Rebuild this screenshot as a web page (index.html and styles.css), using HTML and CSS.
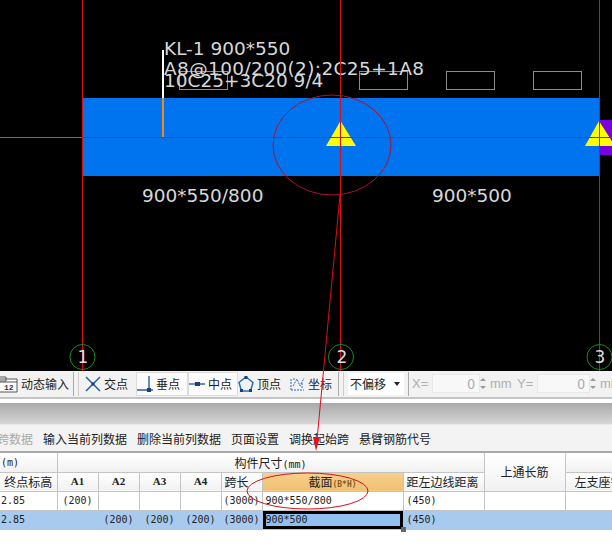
FILE: index.html
```html
<!DOCTYPE html>
<html lang="en">
<head>
    <meta charset="UTF-8">
    <title>钢筋平法输入</title>
    <link rel="stylesheet" href="styles.css">
</head>
<body>
    <div class="page">
        <!-- Drawing area -->
        <svg class="canvas" width="612" height="371" viewBox="0 0 612 371">
            <rect x="83" y="98" width="516" height="78" fill="#0073ee"/>
            <rect x="599" y="120" width="13" height="35" fill="#7a00e0"/>
            <line x1="0" y1="137.5" x2="83" y2="137.5" stroke="#1fa01f"/>
            <line x1="163" y1="50" x2="163" y2="98" stroke="#fff" stroke-width="2"/>
            <line x1="163" y1="98" x2="163" y2="137" stroke="#f08a1c" stroke-width="2"/>
            <g fill="none" stroke="#8c8c8c">
                <rect x="179.5" y="71.5" width="48" height="18"/>
                <rect x="359.5" y="71.5" width="48" height="18"/>
                <rect x="446.5" y="71.5" width="48" height="18"/>
                <rect x="533.5" y="71.5" width="48" height="18"/>
            </g>
            <polygon points="340.5,121 356,146 326,146" fill="#ffff00"/>
            <polygon points="599,121 615,146 585,146" fill="#ffff00"/>
            <g class="cad-text">
                <text x="164" y="55">KL-1 900*550</text>
                <text x="164" y="75" textLength="260">A8@100/200(2);2C25+1A8</text>
                <text x="164" y="87">10C25+3C20 9/4</text>
                <text x="142" y="202">900*550/800</text>
                <text x="432" y="202">900*500</text>
            </g>
            <g fill="none" stroke="#d8101c">
                <line x1="82.5" y1="0" x2="82.5" y2="371"/>
                <line x1="340.5" y1="0" x2="340.5" y2="371"/>
                <line x1="599.5" y1="0" x2="599.5" y2="371"/>
                <line x1="83" y1="137.5" x2="612" y2="137.5"/>
            </g>
            <g fill="none" stroke="#1f8a1f">
                <circle cx="82.5" cy="357" r="12.5"/>
                <circle cx="341" cy="357" r="12.5"/>
                <circle cx="599.5" cy="357" r="12.5"/>
            </g>
            <g class="axis-text">
                <text x="83" y="363">1</text>
                <text x="342" y="363">2</text>
                <text x="600" y="363">3</text>
            </g>
        </svg>

        <!-- Snap toolbar -->
        <div class="toolbar">
            <div class="tool tool-first">
                <svg width="18" height="18" viewBox="0 0 18 18"><path d="M0 4h17v13H0M0 7h17M0 2h6v4H0" fill="#fff" stroke="#555"/><text x="4" y="15" class="mini">12</text></svg>
                <span>动态输入</span>
            </div>
            <i class="grip grip-a"></i>
            <div class="tool w51">
                <svg width="16" height="16" viewBox="0 0 16 16"><path d="M1 1l14 14M15 1L1 15" stroke="#2a5f9e" stroke-width="1.5"/><rect x="6.500" y="6.500" width="3" height="3" fill="#1b3f78"/></svg>
                <span>交点</span>
            </div>
            <div class="tool tool-on w52">
                <svg width="16" height="16" viewBox="0 0 16 16"><path d="M0 14h16M12 0v14" stroke="#2a5f9e" stroke-width="1.4"/><rect x="10" y="12" width="4" height="4" fill="#1b3f78"/></svg>
                <span>垂点</span>
            </div>
            <div class="tool tool-on w50">
                <svg width="16" height="16" viewBox="0 0 16 16"><path d="M0 8h16" stroke="#2a5f9e" stroke-width="1.4"/><rect x="6" y="6" width="5" height="4" fill="#1b3f78"/></svg>
                <span>中点</span>
            </div>
            <div class="tool w51">
                <svg width="16" height="16" viewBox="0 0 16 16"><path d="M8 1l7 5.500L12.500 15h-9L1 6.500z" fill="none" stroke="#2a6fb8" stroke-width="1.500"/><rect x="6.500" y="0" width="3" height="3" fill="#1b3f78"/><rect x="2" y="13" width="3" height="3" fill="#1b3f78"/><rect x="11" y="13" width="3" height="3" fill="#1b3f78"/></svg>
                <span>顶点</span>
            </div>
            <div class="tool w47">
                <svg width="16" height="17" viewBox="0 0 16 17"><path d="M2 15h13M2 15V3M4 11l4-7 3 7 4-8M4 4h3M13 13V8" fill="none" stroke="#2a6fb8" stroke-dasharray="2 1"/></svg>
                <span>坐标</span>
            </div>
            <i class="grip grip-b"></i>
            <div class="combo"><span>不偏移</span><b></b></div>
            <i class="sep"></i>
            <span class="field-label">X=</span>
            <div class="num num-x">0</div>
            <div class="spin"><b></b><b></b></div>
            <span class="field-label unit">mm</span>
            <span class="field-label">Y=</span>
            <div class="num num-y">0</div>
            <div class="spin"><b></b><b></b></div>
            <span class="field-label unit">mm</span>
        </div>

        <div class="band"></div>

        <div class="tabs">
            <span class="off">跨数据</span>
            <span>输入当前列数据</span>
            <span>删除当前列数据</span>
            <span>页面设置</span>
            <span>调换起始跨</span>
            <span>悬臂钢筋代号</span>
        </div>

        <!-- Span table -->
        <table class="grid">
            <colgroup>
                <col class="c-end"><col class="c-a"><col class="c-a"><col class="c-a"><col class="c-a">
                <col class="c-a"><col class="c-sec"><col class="c-dist"><col class="c-dist"><col class="c-last">
            </colgroup>
            <tr class="head">
                <td class="left mono">(m)</td>
                <td colspan="7">构件尺寸<span class="mono">(mm)</span></td>
                <td rowspan="2">上通长筋</td>
                <td></td>
            </tr>
            <tr class="head">
                <td>终点标高</td>
                <td class="small">A1</td>
                <td class="small">A2</td>
                <td class="small">A3</td>
                <td class="small">A4</td>
                <td class="left pad">跨长</td>
                <td class="picked">截面<span class="mono bold">(B*H)</span></td>
                <td class="left pad">距左边线距离</td>
                <td class="left pad-wide">左支座钢筋</td>
            </tr>
            <tr class="mono">
                <td class="left">2.85</td>
                <td>(200)</td><td></td><td></td><td></td>
                <td>(3000)</td>
                <td class="left pad">900*550/800</td>
                <td class="left pad">(450)</td>
                <td></td><td></td>
            </tr>
            <tr class="mono current">
                <td class="left">2.85</td>
                <td></td><td>(200)</td><td>(200)</td><td>(200)</td>
                <td>(3000)</td>
                <td class="left pad active">900*500<i class="handle"></i></td>
                <td class="left pad">(450)</td>
                <td></td><td></td>
            </tr>
        </table>

        <!-- Hand-drawn annotations over the screenshot -->
        <svg class="notes" width="612" height="552" viewBox="0 0 612 552">
            <g fill="none" stroke="#d8101c">
                <ellipse cx="332" cy="145" rx="59" ry="50" stroke="#b01030"/>
                <path d="M340 195L317 440"/>
                <ellipse cx="307.500" cy="491" rx="60.500" ry="18"/>
            </g>
            <polygon points="313,437 320,437 316,451" fill="#e8101c"/>
        </svg>
    </div>
</body>
</html>
```

FILE: styles.css
```css
* {
    box-sizing: border-box;
}
html, body {
    margin: 0;
    background: #fff;
}
.page {
    position: relative;
    width: 612px;
    height: 552px;
    overflow: hidden;
    font-family: "Noto Sans CJK SC", "Liberation Sans", sans-serif;
    font-size: 12px;
    color: #222;
}
.canvas {
    display: block;
    background: #000;
}
.cad-text {
    font-family: "DejaVu Sans", sans-serif;
    font-size: 18.500px;
    fill: #d8d8d8;
}
.axis-text {
    font-family: "DejaVu Sans", sans-serif;
    font-size: 17px;
    fill: #ddd;
    text-anchor: middle;
}
.mini {
    font-family: "Liberation Mono", monospace;
    font-size: 8px;
    font-weight: bold;
    fill: #333;
}
.notes {
    position: absolute;
    top: 0;
    left: 0;
}

/* toolbar */
.toolbar {
    display: flex;
    align-items: center;
    height: 28px;
    padding-bottom: 1px;
    background: #f2f2f2;
    border-bottom: 2px solid #c4c4c4;
    white-space: nowrap;
}
.toolbar > * {
    flex: none;
}
.tool {
    display: flex;
    align-items: center;
    gap: 3px;
    height: 24px;
}
.tool-first {
    width: 72px;
}
.w47 {
    width: 47px;
}
.w50 {
    width: 50px;
}
.w51 {
    width: 51px;
}
.w52 {
    width: 52px;
}
.tool-on {
    background: #fbfbfb;
    border: 1px solid #dcdcdc;
}
.grip {
    width: 6px;
    height: 24px;
    border-left: 1px solid #aaa;
    border-right: 1px solid #ccc;
}
.grip-a {
    margin: 0 6px 0 1px;
}
.grip-b {
    margin: 0 4px 0 2px;
}
.combo {
    display: flex;
    align-items: center;
    justify-content: space-between;
    width: 56px;
    height: 22px;
    padding: 0 4px 0 2px;
    background: #fff;
    font-size: 12px;
}
.combo b {
    border: 3px solid transparent;
    border-top: 4px solid #222;
    border-bottom: 0;
}
.sep {
    width: 1px;
    height: 24px;
    margin: 0 3px 0 4px;
    background: #aaa;
}
.field-label {
    width: 17px;
    color: #b0b0b0;
    font-size: 13px;
    font-family: "Liberation Sans", sans-serif;
}
.field-label.unit {
    width: 22px;
    margin: 0 5px 0 4px;
}
.num {
    height: 19px;
    margin-left: 3px;
    padding-right: 4px;
    background: #f8f8f8;
    border: 1px solid #e8e8e8;
    color: #aaa;
    text-align: right;
    font-size: 14px;
    line-height: 17px;
}
.num-x {
    width: 48px;
}
.num-y {
    width: 53px;
}
.spin {
    display: flex;
    flex-direction: column;
    gap: 5px;
    width: 6px;
}
.spin b {
    border: 3px solid transparent;
    border-bottom: 3px solid #999;
    border-top: 0;
}
.spin b + b {
    border-bottom: 0;
    border-top: 3px solid #999;
}

/* gray strip and the command row */
.band {
    height: 22px;
    margin-top: 4px;
    background: linear-gradient(#a9a9a9, #d6d6d6);
    border-bottom: 1px solid #e8e8e8;
}
.tabs {
    display: flex;
    gap: 10px;
    align-items: center;
    height: 28px;
    margin-left: -3px;
    background: #f3f3f3;
    border-bottom: 2px solid #a8a8a8;
    font-size: 12px;
    white-space: nowrap;
}
.tabs .off {
    color: #aaa;
}

/* span table */
.grid {
    width: 700px;
    table-layout: fixed;
    border-collapse: collapse;
    font-size: 12px;
}
.c-end {
    width: 57px;
}
.c-a {
    width: 41px;
}
.c-sec {
    width: 141px;
}
.c-dist {
    width: 81px;
}
.c-last {
    width: 135px;
}
.grid td {
    height: 19px;
    padding: 0 1px;
    border-right: 1px solid #c4c4c4;
    border-bottom: 1px solid #c4c4c4;
    text-align: center;
    white-space: nowrap;
    overflow: hidden;
    line-height: 17px;
}
.grid .head td {
    background: linear-gradient(#fff, #f1f1f1);
}
.grid .left {
    text-align: left;
}
.grid .pad {
    padding-left: 3px;
}
.grid .pad-wide {
    padding-left: 9px;
}
.mono {
    font-family: "DejaVu Sans Mono", monospace;
    font-size: 10px;
}
span.mono {
    line-height: 1;
}
.bold {
    font-weight: bold;
    font-size: 8px;
    color: #8a5a20;
}
.grid .small {
    font-family: "Liberation Serif", serif;
    font-size: 11px;
    font-weight: bold;
}
.grid .head .picked {
    background: linear-gradient(#f7d08f, #f0c070);
}
.grid .current td {
    background: #a8caee;
    border-right-color: #a8caee;
    border-bottom-color: #a8caee;
}
.grid .current .active {
    position: relative;
    background: #90bff0;
    box-shadow: inset 0 0 0 3px #000;
    overflow: visible;
}
.handle {
    position: absolute;
    right: -3px;
    bottom: -3px;
    width: 5px;
    height: 5px;
    background: #666;
}
```
